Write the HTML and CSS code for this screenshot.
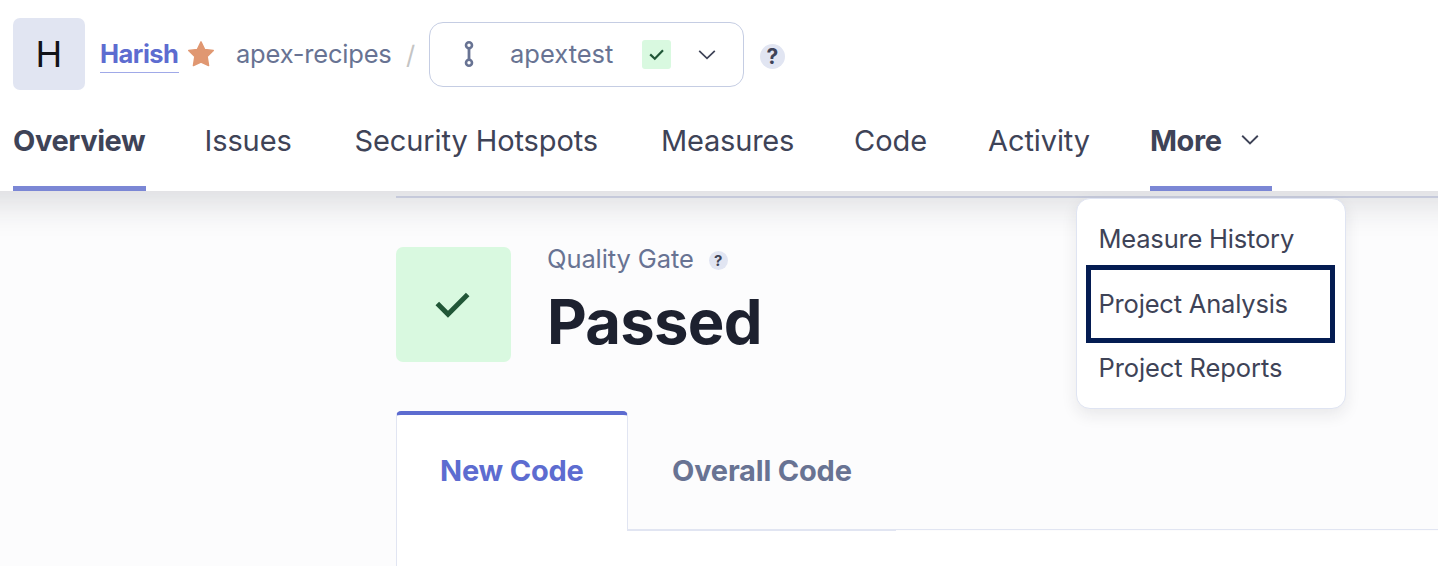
FILE: index.html
```html
<!DOCTYPE html>
<html lang="en">
<head>
<meta charset="utf-8">
<title>apex-recipes - Overview</title>
<link rel="stylesheet" href="styles.css">
</head>
<body>
<div class="page">
  <header class="header">
    <div class="crumbs">
      <div class="avatar">H</div>
      <a class="owner">Harish</a>
      <svg class="star" viewBox="0 0 28 28"><path d="M14 1.8 17.6 9.4 26.3 10.5 20.2 16.6 21.6 25.6 14 22 6.4 25.6 7.8 16.6 1.7 10.5 10.4 9.4Z" fill="#e09771" stroke="#e09771" stroke-width="1.4" stroke-linejoin="round"/></svg>
      <span class="project">apex-recipes</span>
      <span class="slash">/</span>
      <div class="branch">
        <svg class="branch-icon" viewBox="0 0 12 28" fill="none" stroke="#687393"><circle cx="6" cy="5.2" r="3" stroke-width="2.6"/><circle cx="6" cy="22.8" r="3" stroke-width="2.6"/><path d="M6 8v12" stroke-width="2.8"/></svg>
        <span class="branch-name">apextest</span>
        <span class="badge"><svg viewBox="0 0 29 29"><path d="M8.2 14.4 12.8 18.8 21 10.2" fill="none" stroke="#215737" stroke-width="2.2"/></svg></span>
        <svg class="chevron" viewBox="0 0 18 12"><path d="M1.2 1.8 9 9.4 16.8 1.8" fill="none" stroke="#3e4357" stroke-width="1.7"/></svg>
      </div>
      <span class="help">?</span>
    </div>
    <nav class="nav">
      <a class="tab overview active">Overview</a>
      <a class="tab issues">Issues</a>
      <a class="tab hotspots">Security Hotspots</a>
      <a class="tab measures">Measures</a>
      <a class="tab code">Code</a>
      <a class="tab activity">Activity</a>
      <a class="tab more active">More <svg class="chevron" viewBox="0 0 18 12"><path d="M1.2 1.8 9 9.4 16.8 1.8" fill="none" stroke="#3e4357" stroke-width="1.9"/></svg></a>
    </nav>
    <div class="menu">
      <a class="menu-item">Measure History</a>
      <a class="menu-item selected">Project Analysis</a>
      <a class="menu-item">Project Reports</a>
    </div>
  </header>
  <main class="content">
    <section class="gate">
      <div class="gate-icon"><svg viewBox="0 0 36 28"><path d="M2.3 11.4 13 22.2 32.7 2.6" fill="none" stroke="#215737" stroke-width="5"/></svg></div>
      <div class="gate-text">
        <div class="gate-label"><span class="gate-name">Quality Gate</span><span class="help small">?</span></div>
        <div class="gate-status">Passed</div>
      </div>
    </section>
    <section class="panel">
      <div class="code-tabs">
        <a class="code-tab current">New Code</a>
        <a class="code-tab other">Overall Code</a>
        <span class="rule"></span>
      </div>
      <div class="panel-body"></div>
    </section>
  </main>
</div>
</body>
</html>
```
FILE: styles.css
```css
* { box-sizing: border-box; }
body { margin: 0; font-family: Inter, sans-serif; color: #3e4357; background: #fcfcfd; }
.page { height: 566px; overflow: hidden; display: flex; flex-direction: column; }
.header { position: relative; z-index: 1; height: 191px; flex: none; margin: 0 -40px; padding: 18px 40px 0 53px; background: #fff; box-shadow: 0 8px 32px 6px rgba(29, 35, 47, .14); }
.crumbs { display: flex; align-items: center; height: 72px; font-size: 25.5px; white-space: nowrap; color: #687393; }
.avatar { display: grid; place-items: center; width: 72px; height: 72px; border-radius: 7px; background: #e1e5f2; color: #111318; font-size: 36px; }
.owner { margin-left: 15px; width: 79px; height: 37px; line-height: 35px; font-weight: 700; letter-spacing: -.5px; color: #5d6cd0; border-bottom: 1px solid #a0a9e8; }
.star { width: 28px; height: 28px; margin-left: 7.5px; }
.project { width: 160px; margin-left: 21.5px; padding-bottom: 2px; letter-spacing: -.2px; }
.slash { width: 13px; margin-left: 10px; color: #c4c4c4; }
.branch { display: flex; align-items: center; width: 315px; height: 65px; margin-left: 10px; padding-left: 33px; border: 1px solid #c5cde3; border-radius: 14px; }
.branch-icon { width: 12px; height: 28px; }
.branch-name { width: 106px; margin-left: 35px; padding-bottom: 2px; }
.badge { width: 29px; height: 29px; margin-left: 26px; border-radius: 3px; background: #d9f9e0; }
.badge svg { display: block; }
.chevron { width: 18px; height: 12px; }
.branch .chevron { margin: 2px 0 0 27px; }
.help { display: grid; place-items: center; width: 25px; height: 25px; margin: 5px 0 0 16px; border-radius: 50%; background: #e1e5f2; color: #3e4357; font-size: 21px; font-weight: 700; }
.nav { display: flex; height: 101px; }
.tab { padding-top: 33px; font-size: 29px; line-height: 36px; white-space: nowrap; }
.active { font-weight: 700; letter-spacing: -.4px; border-bottom: 5px solid #7b87d5; }
.overview { width: 133px; }
.issues { width: 90px; margin-left: 58.5px; letter-spacing: -.1px; }
.hotspots { width: 247px; margin-left: 60px; letter-spacing: -.1px; }
.measures { width: 135px; margin-left: 59.5px; letter-spacing: -.2px; }
.code { width: 75px; margin-left: 58px; }
.activity { width: 103px; margin-left: 59px; letter-spacing: -.1px; }
.more { width: 122px; margin-left: 59px; }
.more .chevron { margin-left: 13px; vertical-align: 5px; }
.menu { position: absolute; left: 1116px; top: 198px; width: 270px; height: 211px; padding: 8px 9px; border: 1px solid #dfe4f2; border-radius: 14px; background: #fff; box-shadow: 0 6px 16px rgba(29, 33, 47, .09); }
.menu-item { display: flex; align-items: center; height: 58px; padding: 4px 0 0 12.5px; font-size: 25.5px; letter-spacing: -.2px; white-space: nowrap; }
.menu-item.selected { width: 249px; height: 78px; padding: 0 0 2px 7.5px; border: 5px solid #041c52; }
.menu-item:last-child { height: 51px; padding: 0 0 2px 12.5px; letter-spacing: -.1px; }
.content { flex: 1; margin-left: 396px; padding-top: 5px; }
.gate { display: flex; height: 215px; padding-top: 49px; border-top: 2px solid #d9dcee; }
.gate-icon { display: grid; place-items: center; width: 115px; height: 115px; border-radius: 7px; background: #d9f9e0; }
.gate-icon svg { width: 36px; height: 28px; margin: 2px 2px 0 0; }
.gate-text { margin-left: 36px; }
.gate-label { display: flex; align-items: center; height: 24px; font-size: 25.5px; letter-spacing: -.1px; color: #687393; }
.gate-name { padding-bottom: 2px; }
.help.small { width: 19px; height: 19px; margin: 2px 0 0 15px; font-size: 15px; }
.gate-status { margin-top: 13px; font-size: 61.5px; line-height: 76px; font-weight: 700; letter-spacing: -.7px; color: #1d212f; }
.code-tabs { display: flex; height: 120px; font-size: 29px; font-weight: 700; letter-spacing: -.2px; white-space: nowrap; }
.code-tab { padding-top: 42px; line-height: 36px; }
.current { width: 232px; padding-left: 43px; padding-top: 38px; border: 1px solid #e1e5f2; border-top: 4px solid #5d6cd0; border-bottom: 0; border-radius: 5px 5px 0 0; background: #fff; color: #5d6cd0; }
.other { width: 268px; padding-left: 44px; color: #687393; border-bottom: 2px solid #e1e5f2; }
.rule { flex: 1; height: 119px; border-bottom: 1px solid #e1e5f2; }
.panel-body { height: 40px; border-left: 1px solid #e1e5f2; background: #fff; }
```
